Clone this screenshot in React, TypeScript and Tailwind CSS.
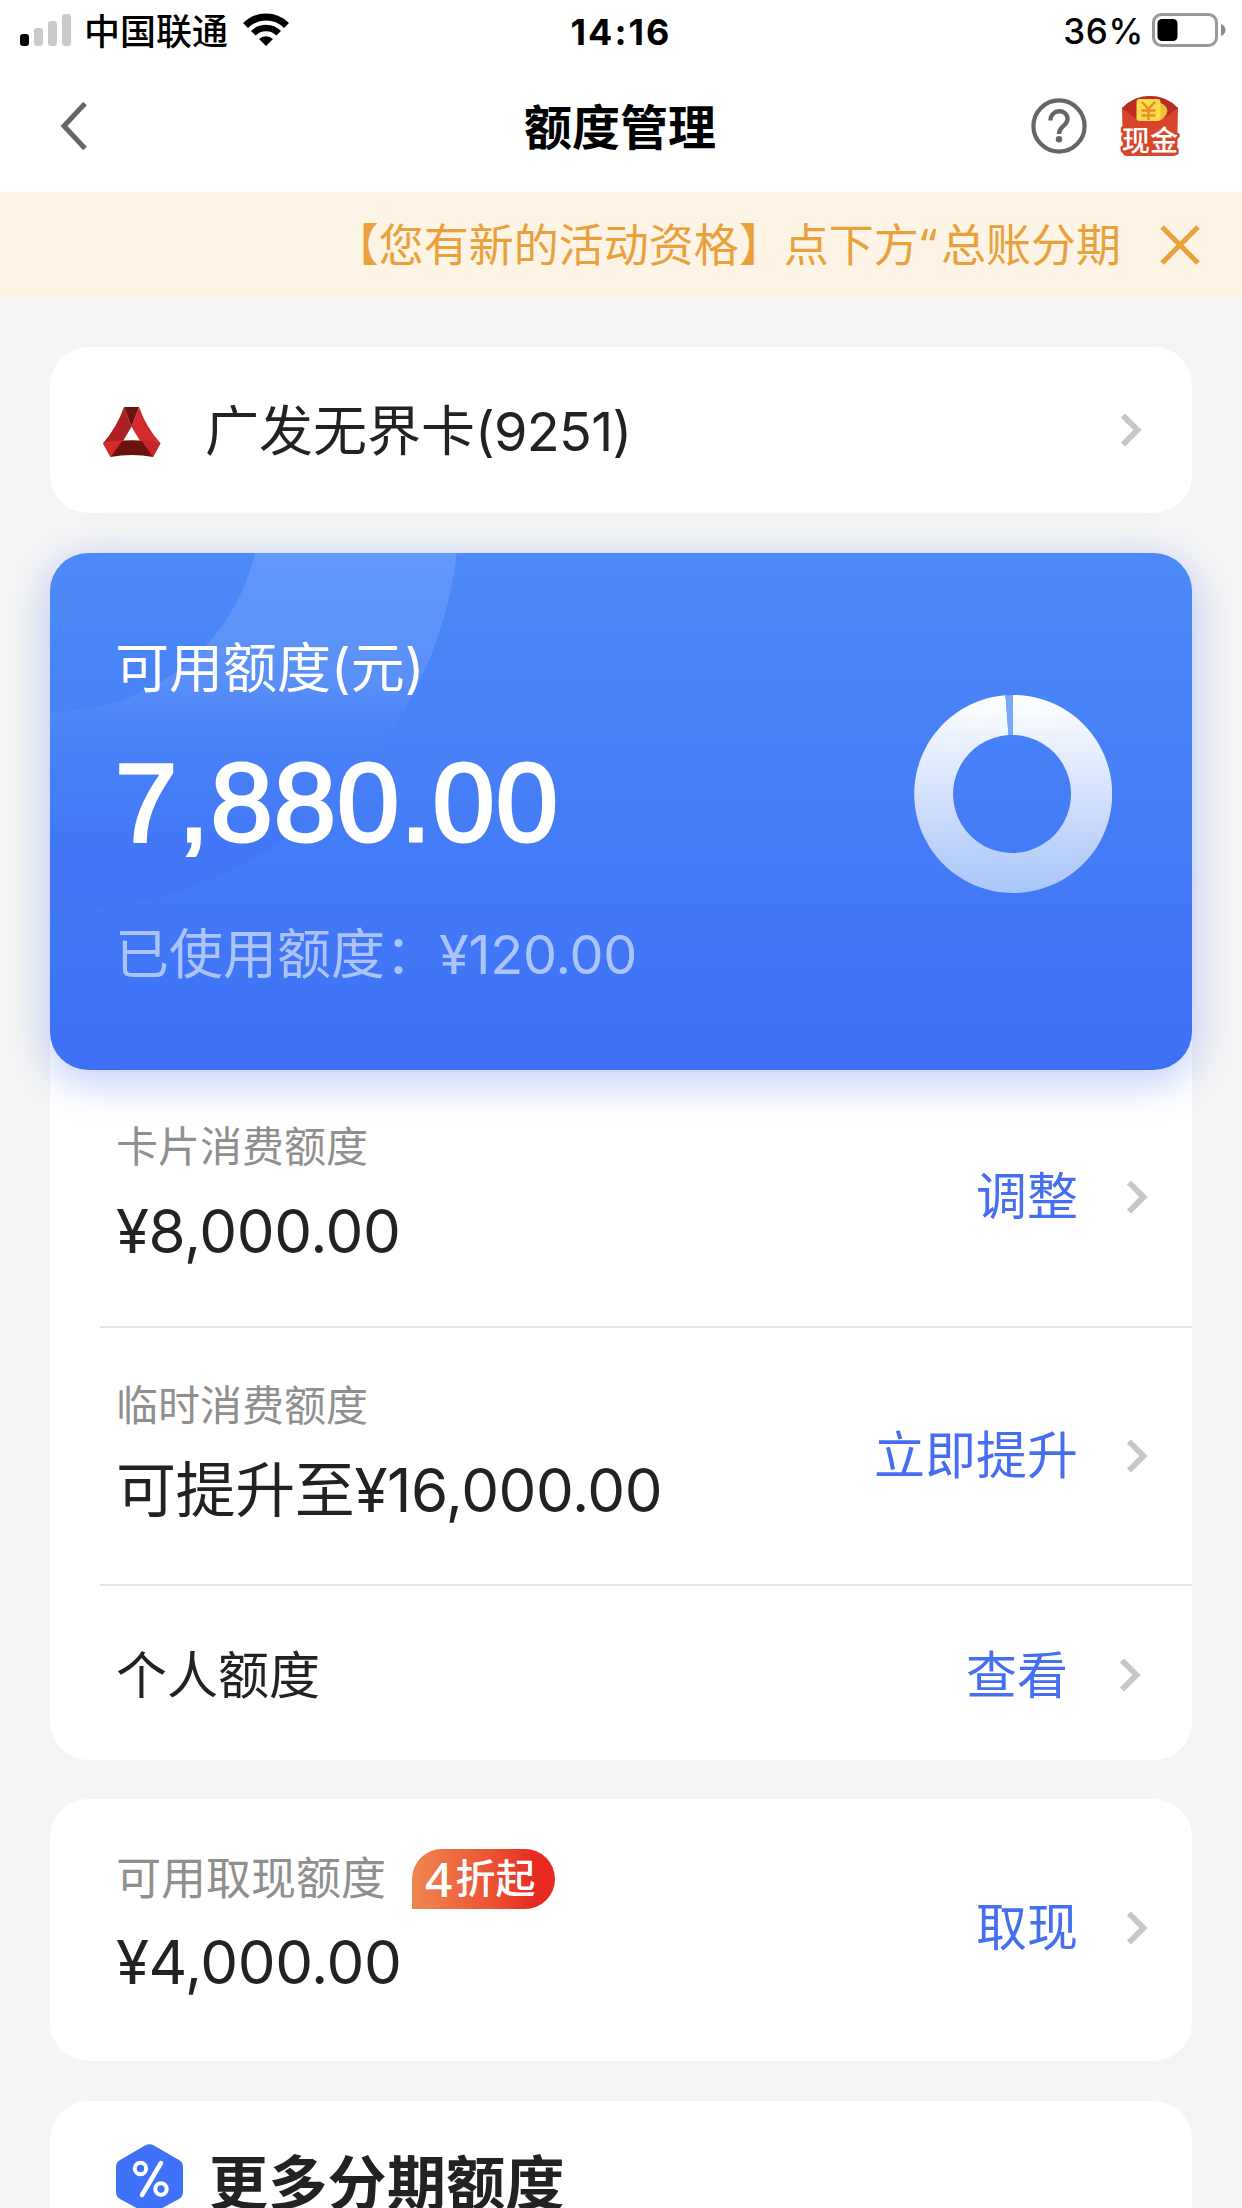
import type { ReactNode } from "react";

interface LimitRowProps {
  label: ReactNode;
  amount: string;
  action: string;
}

function Chevron() {
  return (
    <svg width="22" height="34" viewBox="0 0 22 34" fill="none" className="shrink-0">
      <path d="M3 2.5 L17.5 17 L3 31.5" stroke="#c7c7cb" strokeWidth="6" />
    </svg>
  );
}

function StatusBar() {
  return (
    <div className="flex h-[60px] items-center justify-between pl-5 pr-4">
      <div className="flex w-[460px] items-center">
        <svg width="52" height="32" viewBox="0 0 52 32">
          <rect x="0" y="20" width="9" height="12" rx="3" fill="#000" />
          <rect x="14" y="14" width="9" height="18" rx="3" fill="#cbcbcb" />
          <rect x="28" y="7" width="9" height="25" rx="3" fill="#cbcbcb" />
          <rect x="42" y="0" width="9" height="32" rx="3" fill="#cbcbcb" />
        </svg>
        <span className="ml-3 pt-1 text-[36px] font-medium leading-none">中国联通</span>
        <svg width="46" height="34" viewBox="0 0 46 34" fill="none" className="ml-[15px]">
          <path d="M2.5 12.5 A29 29 0 0 1 43.5 12.5" stroke="#000" strokeWidth="7" />
          <path d="M10.3 20.3 A18 18 0 0 1 35.7 20.3" stroke="#000" strokeWidth="6.5" />
          <path d="M23 33 L16 26 A10 10 0 0 1 30 26 Z" fill="#000" />
        </svg>
      </div>
      <span className="pr-1 pt-[3px] text-[36px] font-bold leading-none tracking-[2px]">14:16</span>
      <div className="flex w-[460px] items-center justify-end gap-2">
        <span className="pt-[3px] text-[35px] font-medium leading-none tracking-[0.7px]">36%</span>
        <svg width="74" height="34" viewBox="0 0 74 34">
          <rect x="1.5" y="1.5" width="63" height="31" rx="8" fill="none" stroke="#999" strokeWidth="3" />
          <rect x="5.5" y="6" width="20" height="22" rx="4.5" fill="#000" />
          <path d="M69 11 Q73.5 13 73.5 17 Q73.5 21 69 23 Z" fill="#888" />
        </svg>
      </div>
    </div>
  );
}

function CashPacket() {
  return (
    <svg width="60" height="62" viewBox="0 0 60 62">
      <path d="M2 13 Q14 1 30 1 Q46 1 58 13 L57 58 Q57 61 53 61 L7 61 Q3 61 3 58 Z" fill="#d9452b" />
      <path d="M2 13 Q14 1 30 1 Q46 1 58 13 L45 23 Q30 31 15 23 Z" fill="#b92c22" />
      <path d="M15 23 Q30 19 45 23 L45 32 H15 Z" fill="#d9452b" />
      <path d="M39 7 Q50 12 46.5 19 Q43 25 38 26 Z" fill="#f0c030" />
      <rect x="16.500" y="4" width="24" height="22" rx="3" fill="#f8dc4b" />
      <path d="M22 7 L28.5 14 L35 7 M28.5 14 V25 M21.5 15.500 H35.500 M21.500 20.500 H35.500" stroke="#ea8a2c" strokeWidth="2.500" fill="none" />
      <text
        x="30"
        y="56"
        textAnchor="middle"
        fontSize="28"
        fontWeight="500"
        fill="#fff"
        stroke="#d9452b"
        strokeWidth="5"
        strokeLinejoin="round"
        paintOrder="stroke"
      >
        现金
      </text>
    </svg>
  );
}

function Header() {
  return (
    <div className="flex h-[132px] items-center justify-between pl-[60px] pr-[62px]">
      <div className="w-[200px]">
        <svg width="28" height="48" viewBox="0 0 28 48" fill="none">
          <path d="M25 1.5 L4 24 L25 46.5" stroke="#666" strokeWidth="5" />
        </svg>
      </div>
      <h1 className="pt-[3px] text-[48px] font-bold leading-none">额度管理</h1>
      <div className="flex w-[200px] items-center justify-end gap-[33px]">
        <svg width="56" height="56" viewBox="0 0 56 56" fill="none">
          <circle cx="28" cy="28" r="25.6" stroke="#666" strokeWidth="4.2" />
          <path d="M19.5 22.5 C19.5 10.5 36.5 10.5 36.5 21 C36.5 28 28 28 28 36" stroke="#666" strokeWidth="4.4" />
          <circle cx="28" cy="41.3" r="3.2" fill="#666" />
        </svg>
        <CashPacket />
      </div>
    </div>
  );
}

function Notice() {
  return (
    <div className="flex h-[106px] items-center justify-end bg-[#fdf4e6] pr-[42px] text-[#e9a13b]">
      <span className="whitespace-nowrap text-[45px] leading-none">
        【您有新的活动资格】点下方
        <span className="ml-0.5 mr-1 font-['Noto_Sans']">“</span>总账分期
      </span>
      <svg width="40" height="40" viewBox="0 0 40 40" fill="none" className="ml-[39px]">
        <path d="M2 2 L38 38 M38 2 L2 38" stroke="currentColor" strokeWidth="5" />
      </svg>
    </div>
  );
}

function BankLogo() {
  return (
    <svg width="58" height="51" viewBox="0 0 58 51" className="mt-1">
      <path d="M21 0 L28.5 19.7 L20.5 33.3 L0 36.3 Q14 20 21 0 Z" fill="#ad2023" />
      <path d="M36 0 L28.5 19.7 L36.7 33.3 L57.5 36.3 Q43 20 36 0 Z" fill="#d4292d" />
      <path d="M21 0 H36 L28.5 19.7 Z" fill="#6c120d" />
      <path d="M0 36.3 Q10 33.5 20.5 33.3 L7.5 50 Z" fill="#d4292d" />
      <path d="M57.5 36.3 Q47 33.5 36.7 33.3 L50 50 Z" fill="#d4292d" />
      <path d="M14 34 Q28.5 32.5 43.5 34 L50 50 Q28.5 46 7.5 50 Z" fill="#6c120d" />
      <path d="M0 36.3 Q10 33.7 19.5 33.4 L7.5 50 Z" fill="#d4292d" />
      <path d="M57.5 36.3 Q47 33.7 38.5 33.4 L50 50 Z" fill="#c4262a" />
    </svg>
  );
}

function UsageRing() {
  return (
    <svg width="198" height="198" viewBox="-99 -99 198 198">
      <defs>
        <linearGradient id="ring" x1="0" y1="0" x2="0" y2="1">
          <stop offset="0" stopColor="#ffffff" />
          <stop offset="1" stopColor="#a9c5f9" />
        </linearGradient>
      </defs>
      <path d="M0 -99 A99 99 0 1 1 -7.5 -98.7 L-4.5 -58.9 A59 59 0 1 0 0 -59 Z" fill="url(#ring)" />
      <path d="M0 -99 A99 99 0 0 0 -7.5 -98.7 L-4.5 -58.9 A59 59 0 0 1 0 -59 Z" fill="#7aa8fa" />
    </svg>
  );
}

function BalanceCard() {
  return (
    <div className="relative z-10 mt-10 h-[517px] rounded-[38px] bg-linear-to-b from-[#4d8af7] to-[#3e70f6] shadow-[0_10px_44px_rgba(62,105,245,0.36)]">
      <svg width="420" height="370" viewBox="0 0 420 370" className="absolute left-0 top-0 rounded-tl-[38px]">
        <defs>
          <linearGradient id="arc" gradientUnits="userSpaceOnUse" x1="0" y1="0" x2="0" y2="360">
            <stop offset="0" stopColor="#fff" stopOpacity="0.12" />
            <stop offset="0.35" stopColor="#fff" stopOpacity="0.1" />
            <stop offset="0.6" stopColor="#4a7cf7" stopOpacity="0" />
            <stop offset="0.8" stopColor="#3a60f5" stopOpacity="0.2" />
            <stop offset="1" stopColor="#3a60f5" stopOpacity="0.12" />
          </linearGradient>
        </defs>
        <circle cx="5" cy="-47" r="305" fill="none" stroke="url(#arc)" strokeWidth="199" />
      </svg>
      <div className="relative flex h-full items-center justify-between pl-[65px] pr-20">
        <div className="flex h-full flex-col pt-[88px] text-white">
          <span className="text-[54px] leading-[56px]">可用额度(元)</span>
          <span className="mt-12 font-['Liberation_Sans'] text-[112px] leading-[116px] tracking-[1px] [-webkit-text-stroke:3px_white]">
            7,880.00
          </span>
          <span className="mt-[66px] text-[54px] leading-[56px] text-[#abc5fb]">
            已使用额度：<span className="tracking-[-0.2px]">¥120.00</span>
          </span>
        </div>
        <div className="-mt-[35px]">
          <UsageRing />
        </div>
      </div>
    </div>
  );
}

function LimitRow({ label, amount, action }: LimitRowProps) {
  return (
    <div className="flex items-center justify-between pr-11">
      <div className="flex flex-col">
        <div className="flex h-[62px] items-center text-[42px] leading-none text-[#8f8f8f]">{label}</div>
        <span className="mt-[14px] text-[60px] leading-[78px] tracking-[-0.4px]">{amount}</span>
      </div>
      <div className="flex items-center gap-12 pt-[7px]">
        <span className="text-[51px] leading-none text-[#456ff0]">{action}</span>
        <Chevron />
      </div>
    </div>
  );
}

export default function App() {
  return (
    <div className="h-[2208px] w-[1242px] overflow-hidden bg-[#f5f5f5] font-['Inter','Noto_Sans_CJK_SC',sans-serif] text-[#222]">
      <div className="bg-white text-black">
        <StatusBar />
        <Header />
      </div>
      <Notice />

      <div className="px-[50px] pt-[49px]">
        <div className="flex h-[166px] items-center rounded-[38px] bg-white pl-[53px] pr-[50px]">
          <BankLogo />
          <span className="ml-[44px] flex-1 pt-[3px] text-[54px] leading-none">
            广发无界卡<span className="tracking-[-0.7px]">(9251)</span>
          </span>
          <Chevron />
        </div>

        <BalanceCard />

        <div className="-mt-20 h-[770px] rounded-[38px] bg-white pl-[50px] pt-20">
          <div className="h-[258px] border-b-2 border-[#e5e5e5] pl-4 pt-[46px]">
            <LimitRow label="卡片消费额度" amount="¥8,000.00" action="调整" />
          </div>
          <div className="h-[258px] border-b-2 border-[#e5e5e5] pl-4 pt-[47px]">
            <LimitRow label="临时消费额度" amount="可提升至¥16,000.00" action="立即提升" />
          </div>
          <div className="flex h-[174px] items-center justify-between pl-4 pr-[51px] pt-[3px]">
            <span className="pt-0.5 text-[51px] leading-none">个人额度</span>
            <div className="flex items-center gap-[51px]">
              <span className="pt-0.5 text-[51px] leading-none text-[#456ff0]">查看</span>
              <Chevron />
            </div>
          </div>
        </div>

        <div className="mt-[39px] h-[262px] rounded-[38px] bg-white pl-[66px] pt-12">
          <LimitRow
            label={
              <>
                <span className="text-[45px]">可用取现额度</span>
                <span className="ml-[26px] mt-0.5 flex h-[60px] w-[143px] shrink-0 items-center gap-[3px] rounded-[30px] rounded-bl-none bg-linear-to-r from-[#ef8551] to-[#e72b22] to-85% pl-[13px] text-[40px] font-medium text-white">
                  <span className="font-['Noto_Sans'] text-[48px]">4</span>折起
                </span>
              </>
            }
            amount="¥4,000.00"
            action="取现"
          />
        </div>

        <div className="mt-10 flex h-[240px] items-start rounded-t-[38px] bg-white pl-[66px] pt-[43px]">
          <svg width="67" height="70" viewBox="0 0 67 70">
            <path d="M29 1.5 Q33.5 -1 38 1.5 L63 16 Q67 18 67 23 V48 Q67 53 63 55 L38 68.5 Q33.5 71 29 68.5 L4 55 Q0 53 0 48 V23 Q0 18 4 16 Z" fill="#3f72f8" />
            <circle cx="24.5" cy="24.5" r="5.7" fill="none" stroke="#fff" strokeWidth="4" />
            <circle cx="45" cy="45" r="5.7" fill="none" stroke="#fff" strokeWidth="4" />
            <path d="M45 19 L26 51" stroke="#fff" strokeWidth="4.5" strokeLinecap="round" />
          </svg>
          <span className="ml-[26px] mt-2.5 text-[59px] font-bold leading-[60px] tracking-[0.3px]">更多分期额度</span>
        </div>
      </div>
    </div>
  );
}
